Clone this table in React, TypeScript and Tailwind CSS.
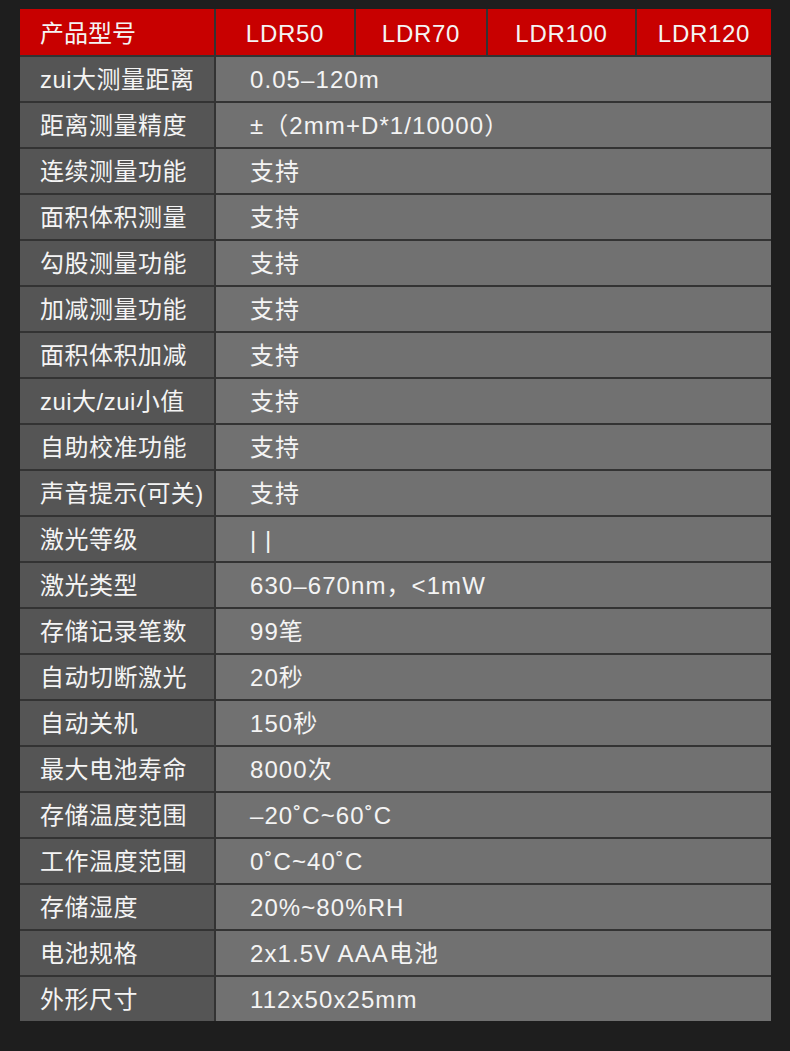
import React from "react";

const rows: [string, string][] = [
  ["zui大测量距离", "0.05–120m"],
  ["距离测量精度", "±（2mm+D*1/10000）"],
  ["连续测量功能", "支持"],
  ["面积体积测量", "支持"],
  ["勾股测量功能", "支持"],
  ["加减测量功能", "支持"],
  ["面积体积加减", "支持"],
  ["zui大/zui小值", "支持"],
  ["自助校准功能", "支持"],
  ["声音提示(可关)", "支持"],
  ["激光等级", "| |"],
  ["激光类型", "630–670nm，<1mW"],
  ["存储记录笔数", "99笔"],
  ["自动切断激光", "20秒"],
  ["自动关机", "150秒"],
  ["最大电池寿命", "8000次"],
  ["存储温度范围", "–20˚C~60˚C"],
  ["工作温度范围", "0˚C~40˚C"],
  ["存储湿度", "20%~80%RH"],
  ["电池规格", "2x1.5V AAA电池"],
  ["外形尺寸", "112x50x25mm"],
];

const models = ["LDR50", "LDR70", "LDR100", "LDR120"];
const modelWidths = ["w-[138px]", "w-[130px]", "w-[147px]", "flex-1"];

export default function App() {
  return (
    <div
      className="min-h-[1051px] w-[790px] bg-[#1e1e1e] pt-[9px] pl-[20px] pr-[19px] text-[24px] leading-none text-[#f4f4f4]"
      style={{ fontFamily: '"Liberation Sans", "Noto Sans CJK SC", sans-serif' }}
    >
      <div className="flex flex-col gap-[2px] bg-[#333333]">
        <div className="flex h-[46px] gap-[2px]">
          <div className="flex w-[194px] items-center bg-[#c80000] pt-[3px] pl-[20px]">产品型号</div>
          {models.map((m, i) => (
            <div
              key={m}
              className={`flex items-center justify-center bg-[#c80000] pt-[3px] tracking-[0.03em] ${modelWidths[i]}`}
            >
              {m}
            </div>
          ))}
        </div>
        {rows.map(([label, value]) => (
          <div key={label} className="flex h-[44px] gap-[2px]">
            <div className="flex w-[194px] items-center bg-[#555555] pt-[2px] pl-[20px] tracking-[0.02em]">
              {label}
            </div>
            <div className="flex flex-1 items-center bg-[#717171] pt-[2px] pl-[34px] tracking-[0.045em]">
              {value}
            </div>
          </div>
        ))}
      </div>
    </div>
  );
}
